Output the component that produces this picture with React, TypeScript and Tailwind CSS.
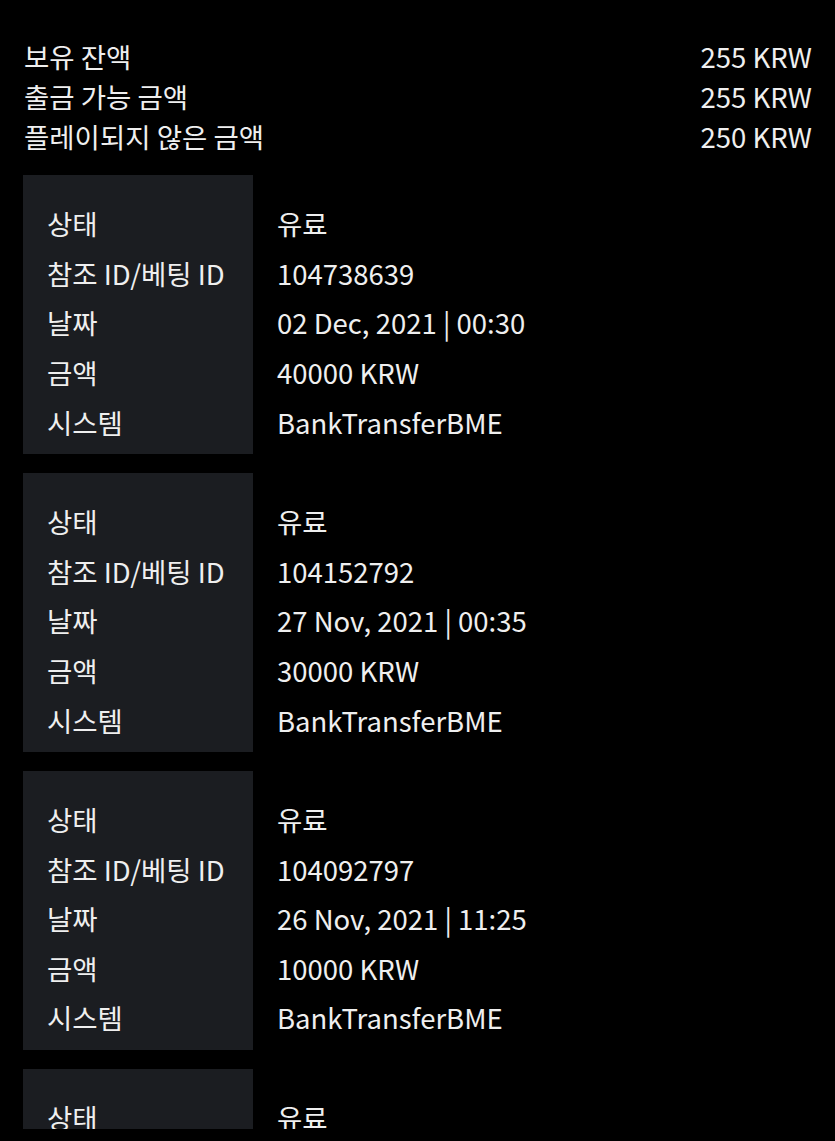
import React from "react";

const summary = [
  ["보유 잔액", "255 KRW"],
  ["출금 가능 금액", "255 KRW"],
  ["플레이되지 않은 금액", "250 KRW"],
];

const records = [
  { id: "104738639", date: "02 Dec, 2021 | 00:30", amount: "40000 KRW" },
  { id: "104152792", date: "27 Nov, 2021 | 00:35", amount: "30000 KRW" },
  { id: "104092797", date: "26 Nov, 2021 | 11:25", amount: "10000 KRW" },
  { id: "104000000", date: "20 Nov, 2021 | 10:00", amount: "10000 KRW" },
];

const font = { fontFamily: '"Noto Sans CJK KR", "Noto Sans", sans-serif' };

function Card({ r }: { r: (typeof records)[number] }) {
  const rows: [string, string][] = [
    ["상태", "유료"],
    ["참조 ID/베팅 ID", r.id],
    ["날짜", r.date],
    ["금액", r.amount],
    ["시스템", "BankTransferBME"],
  ];
  return (
    <div className="flex">
      <div className="w-[230px] shrink-0 bg-[#1b1d21] pt-[24px] pb-[7px] pl-[24px]">
        {rows.map(([l]) => (
          <div key={l} className="h-[49.6px] flex items-center whitespace-nowrap">{l}</div>
        ))}
      </div>
      <div className="pt-[24px] pl-[24px]">
        {rows.map(([l, v]) => (
          <div key={l} className="h-[49.6px] flex items-center whitespace-nowrap">{v}</div>
        ))}
      </div>
    </div>
  );
}

export default function App() {
  return (
    <div
      className="w-[835px] h-[1141px] bg-black text-[#efefef] text-[27.5px] overflow-hidden"
      style={font}
    >
      <div className="h-[1129px] overflow-hidden px-[23px] pt-[37px]">
        <div className="flex flex-col">
          {summary.map(([l, v]) => (
            <div key={l} className="flex justify-between h-[40px] items-center pl-[1px]">
              <span>{l}</span>
              <span>{v}</span>
            </div>
          ))}
        </div>
        <div className="mt-[18px] flex flex-col gap-[19px]">
          {records.map((r) => (
            <Card key={r.id} r={r} />
          ))}
        </div>
      </div>
    </div>
  );
}
